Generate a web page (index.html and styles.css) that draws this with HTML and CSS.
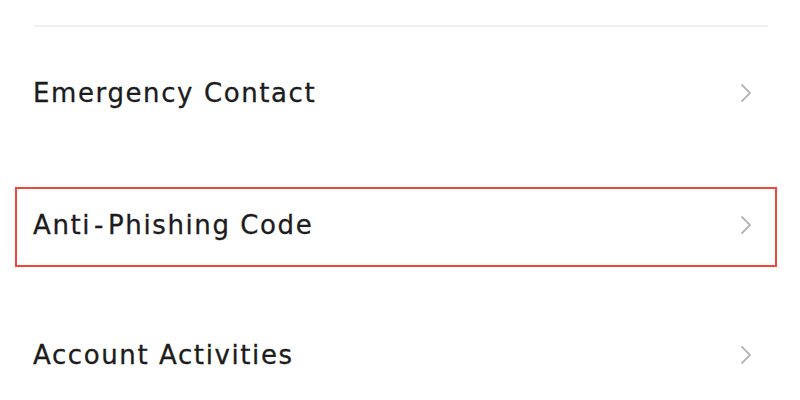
FILE: index.html
```html
<!DOCTYPE html>
<html>
<head>
<meta charset="utf-8">
<link rel="stylesheet" href="styles.css">
</head>
<body>
<div class="list">
  <div class="divider"></div>
  <div class="rows">
    <div class="row">
      <span class="label">Emergency Contact</span>
      <svg class="chev" viewBox="0 0 14 20" width="14" height="20"><path d="M3 2 L11 10 L3 18" fill="none" stroke="#b5b5b5" stroke-width="1.8" stroke-linecap="round" stroke-linejoin="round"/></svg>
    </div>
    <div class="row highlight">
      <span class="label">Anti<span class="dash">-</span>Phishing Code</span>
      <svg class="chev" viewBox="0 0 14 20" width="14" height="20"><path d="M3 2 L11 10 L3 18" fill="none" stroke="#b5b5b5" stroke-width="1.8" stroke-linecap="round" stroke-linejoin="round"/></svg>
    </div>
    <div class="row">
      <span class="label">Account Activities</span>
      <svg class="chev" viewBox="0 0 14 20" width="14" height="20"><path d="M3 2 L11 10 L3 18" fill="none" stroke="#b5b5b5" stroke-width="1.8" stroke-linecap="round" stroke-linejoin="round"/></svg>
    </div>
  </div>
</div>
</body>
</html>
```
FILE: styles.css
```css
html, body {
  margin: 0;
  padding: 0;
  background: #ffffff;
}
body {
  width: 800px;
  height: 400px;
  overflow: hidden;
  font-family: "DejaVu Sans", sans-serif;
}
.list {
  padding-top: 25px;
}
.divider {
  height: 2px;
  background: #f0f0f0;
  margin: 0 32px 0 33px;
}
.rows {
  display: flex;
  flex-direction: column;
  gap: 51px;
  margin-top: 26px;
  padding: 0 23px 0 15px;
}
.row {
  height: 76px;
  border: 2px solid transparent;
  display: flex;
  align-items: center;
  justify-content: space-between;
  padding: 0 22px 0 16px;
}
.row.highlight {
  border-color: #f2473b;
  margin-top: 3px;
  margin-bottom: -3px;
  height: 72px;
  padding-bottom: 4px;
}
.label {
  font-size: 26px;
  letter-spacing: 1.6px;
  color: #1c1c1c;
  -webkit-text-stroke: 0.3px #1c1c1c;
}
.dash {
  margin: 0 3px;
}
.chev {
  display: block;
}
```
